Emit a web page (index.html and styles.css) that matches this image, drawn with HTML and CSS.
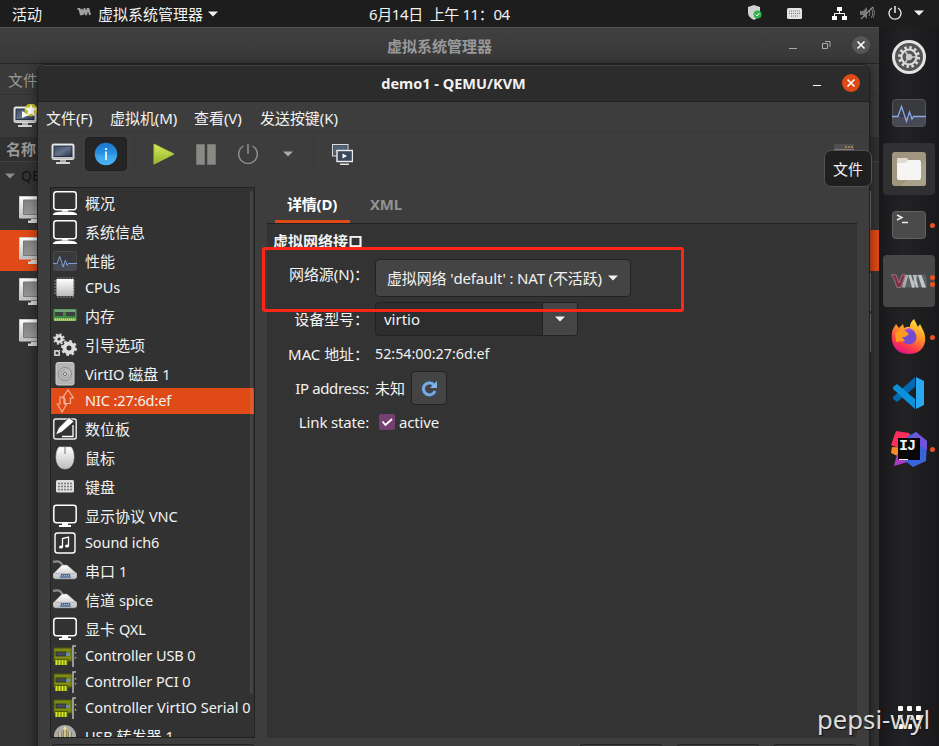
FILE: index.html
```
<!DOCTYPE html>
<html lang="zh-CN">
<head>
<meta charset="utf-8">
<title>demo1 - QEMU/KVM</title>
<link rel="stylesheet" href="styles.css">
</head>
<body>
<svg class="defs" width="0" height="0" aria-hidden="true">
  <defs>
    <linearGradient id="gSilver" x1="0" y1="0" x2="0" y2="1"><stop offset="0" stop-color="#fff"/><stop offset="1" stop-color="#bcbcbc"/></linearGradient>
    <linearGradient id="gScreen" x1="0" y1="0" x2="1" y2="1"><stop offset="0" stop-color="#3c4a62"/><stop offset=".5" stop-color="#64728a"/><stop offset="1" stop-color="#222f47"/></linearGradient>
    <linearGradient id="gGrey" x1="0" y1="0" x2="1" y2="1"><stop offset="0" stop-color="#808080"/><stop offset="1" stop-color="#aaa"/></linearGradient>
    <linearGradient id="gInfo" x1="0" y1="0" x2="0" y2="1"><stop offset="0" stop-color="#1a76d2"/><stop offset=".52" stop-color="#2b93e0"/><stop offset=".53" stop-color="#39a1e8"/><stop offset="1" stop-color="#4cb2f0"/></linearGradient>
    <linearGradient id="gPlay" x1="0" y1="0" x2="0" y2="1"><stop offset="0" stop-color="#e0e85c"/><stop offset="1" stop-color="#8fb52c"/></linearGradient>
    <linearGradient id="gFox" x1=".8" y1="0" x2=".3" y2="1"><stop offset="0" stop-color="#ffe840"/><stop offset=".4" stop-color="#ff9a28"/><stop offset=".75" stop-color="#ff3a48"/><stop offset="1" stop-color="#d8108c"/></linearGradient>
    <symbol id="display" viewBox="0 0 24 24"><rect x=".8" y=".8" width="22.400" height="17.900" rx="2.600" fill="none" stroke="#fff" stroke-width="1.500"/><path d="M9 19h6v1.200H9zM2 21.500c6-1.200 14-1.200 20 0l2 1.500v1H0v-1z" fill="#fff"/></symbol>
    <symbol id="screen" viewBox="0 0 24 24"><rect x=".8" y="1.300" width="22.400" height="17.400" rx="2.600" fill="none" stroke="#fff" stroke-width="1.500"/><path d="M9 19h6v2h3v2H6v-2h3z" fill="#fff"/></symbol>
    <symbol id="pulse" viewBox="0 0 34 28"><rect x=".5" y=".5" width="33" height="27" rx="3" fill="#393a3e" stroke="#555"/><path d="M1 18h32v7q0 2-2 2H3q-2 0-2-2z" fill="#474955"/><path d="M0 17.500h6l3.500-10 5 15 3-9.500 2.500 7 1.500-2.500H34" fill="none" stroke="#8ba8e8" stroke-width="1.300"/></symbol>
    <symbol id="serial" viewBox="0 0 24 24"><path d="M0 3c8-2 8 1 11 6" fill="none" stroke="#8c8c8c" stroke-width="2.200"/><path d="M9 6h5l8 7 2 1.500v4L22 20H2l-2-1.500V15z" fill="url(#gSilver)" stroke="#888" stroke-width=".5"/><path d="M2 14.500h20" stroke="#aaa" stroke-width=".7"/><path d="M8 15h9l1 4H7z" fill="#4f6f96"/><path d="M9 16.500h8M8.500 18h9" stroke="#c7d7ea" stroke-width=".7" stroke-dasharray="1 1"/></symbol>
    <symbol id="card" viewBox="0 0 24 24"><path d="M1 4h18v13H1z" fill="#748313" stroke="#4e580c"/><path d="M2 15h13v6H2z" fill="#536000"/><path d="M3.500 21v-5M6.500 21v-5M9.500 21v-5M12.500 21v-5" stroke="#d9ea28" stroke-width="2"/><path d="M3 8h10v4H3z" fill="#454b50" stroke="#222" stroke-width=".6"/><path d="M13 9h4v3h-4z" fill="#648db5"/><path d="M1.500 5.500h15M1.500 13.500h17" stroke="#87951b" stroke-width=".8"/><path d="M23 2h-3v21" fill="none" stroke="#bbb" stroke-width="1.500"/><path d="M22.500 8v1.500M22.500 13v1.500" stroke="#aaa" stroke-width="1.500"/></symbol>
    <symbol id="vm" viewBox="0 0 32 27"><path d="M.5.500H32v21.500H.500z" fill="url(#gSilver)" stroke="#ccc"/><path d="M4.500 4H32v14.500H4.500z" fill="url(#gGrey)" stroke="#7a7a7a"/><path d="M12 23h20v1.500H12zM9 24.500h23V27H9z" fill="#d8d8d8"/></symbol>
    <symbol id="host" viewBox="0 0 24 22"><rect x="1" y="1" width="22" height="15.500" rx="1.500" fill="url(#gSilver)" stroke="#ddd"/><rect x="3" y="3" width="18" height="10.500" fill="url(#gScreen)" stroke="#25324a"/><path d="M9 17h6v2H9z" fill="#aaa"/><path d="M5 19h14v2H5z" fill="#d4d4d0"/></symbol>
    <symbol id="caret" viewBox="0 0 10 6"><path d="M0 .5h10L5 5.500z" fill="currentColor"/></symbol>
    <symbol id="close" viewBox="0 0 18 18"><circle cx="9" cy="9" r="9" fill="currentColor"/><path d="M5.500 5.500l7 7M12.500 5.500l-7 7" stroke="#fff" stroke-width="1.600"/></symbol>
  </defs>
</svg>

<header class="topbar">
  <span class="activities">活动</span>
  <svg class="vmmini" viewBox="0 0 14 9"><path d="M.5 1h2l1.500 6 1-6M5.500 7L7.500 1 9 7l1.500-6h1L13 7" fill="none" stroke="#a0a0a0" stroke-width="2"/></svg>
  <span class="app">虚拟系统管理器</span>
  <svg class="caret"><use href="#caret"/></svg>
  <span class="clock">6月14日&nbsp; 上午 11：04</span>
  <div class="tray">
    <svg width="14" height="16" viewBox="0 0 14 16"><path d="M6 0l6 2v6q0 4-6 7Q0 12 0 8V2z" fill="#d2d2d2"/><circle cx="9.500" cy="9.500" r="4" fill="#2fb44a"/><path d="M7.500 9.500l1.500 1.500 2.500-3" fill="none" stroke="#fff"/></svg>
    <svg width="15" height="11" viewBox="0 0 15 11"><rect width="15" height="11" rx="1.500" fill="#e2e2e2"/><path d="M2 3h11M2 5.500h11M4 8h7" stroke="#777" stroke-dasharray="1 1"/></svg>
    <svg width="15" height="13" viewBox="0 0 15 13"><path d="M5 0h5v4H5zM0 9h5v4H0zM10 9h5v4h-5z" fill="#fff"/><path d="M7.500 4v3M2.500 9V6.500h10V9" fill="none" stroke="#fff"/></svg>
    <svg width="15" height="14" viewBox="0 0 15 14"><path d="M0 5h3l4-4v12L3 9H0z" fill="#777"/><path d="M9 4q2 3 0 6M11 2q3.500 5 0 10M13 1q3 6 0 11" fill="none" stroke="#777"/><path d="M1 13L13 1" stroke="#8c8c8c" stroke-width="1.300"/></svg>
    <svg width="14" height="14" viewBox="0 0 14 14"><path d="M4 2a6 6 0 1 0 6 0" fill="none" stroke="#eee" stroke-width="1.300"/><path d="M7 0v7" stroke="#fff" stroke-width="1.400"/></svg>
    <svg width="10" height="6"><use href="#caret"/></svg>
  </div>
</header>

<div class="desktop">
  <section class="manager">
    <div class="manager-title">
      <b>虚拟系统管理器</b>
      <div class="controls">
        <i class="min"></i>
        <svg width="9" height="9" viewBox="0 0 9 9"><path d="M.5 2.500h5v5h-5zM3 .5h5V6" fill="none" stroke="#aaa"/></svg>
        <svg class="close" width="18" height="18"><use href="#close"/></svg>
      </div>
    </div>
    <div class="manager-menu">文件</div>
    <div class="manager-tools">
      <svg width="24" height="24" viewBox="0 0 24 24"><use href="#host" y="2" width="24" height="22"/><path d="M9 7l7 4-7 3z" fill="#fff"/><circle cx="18" cy="6" r="6.500" fill="#d8d420" opacity=".85"/><path d="M18 0l1.700 4 4.300.3-3.300 2.900L22 12l-4-2.500L14 12l1.300-4.800L12 4.300l4.300-.3z" fill="#fff"/></svg>
    </div>
    <div class="manager-head">名称</div>
    <div class="manager-group"><svg width="10" height="6"><use href="#caret"/></svg><span>QE</span></div>
    <div class="vmrow"><svg><use href="#vm"/></svg><i></i></div>
    <div class="vmrow selected"><svg><use href="#vm"/></svg></div>
    <div class="vmrow"><svg><use href="#vm"/></svg><i></i></div>
    <div class="vmrow"><svg><use href="#vm"/></svg><i></i></div>
  </section>

  <nav class="dock">
    <div class="slot"><svg width="34" height="34" viewBox="0 0 34 34"><circle cx="17" cy="17" r="15.500" fill="#555" stroke="#e4e4e4" stroke-width="3"/><circle cx="17" cy="17" r="9.500" fill="none" stroke="#ddd" stroke-width="3" stroke-dasharray="2.500 2.470"/><circle cx="17" cy="17" r="7.500" fill="none" stroke="#ddd" stroke-width="2"/><circle cx="17" cy="17" r="3.200" fill="#ccc"/><path d="M17 17h7M17 17l-4-6M17 17l-4 6" stroke="#ccc" stroke-width="1.500"/></svg></div>
    <div class="slot"><svg width="34" height="28"><use href="#pulse"/></svg></div>
    <div class="slot lit"><svg width="34" height="34" viewBox="0 0 34 34"><rect width="34" height="34" rx="3" fill="#a0967f"/><path d="M34 8v23q0 3-3 3H9z" fill="#aaa18b"/><path d="M5 8q0-2 2-2h7q1 0 2 2h11q2 0 2 2v15q0 3-2 3H7q-2 0-2-3z" fill="#f7f5f3"/><path d="M5 8q0-2 2-2h7q1 0 2 2-1 3-4 3H5z" fill="#e0dbd2"/></svg></div>
    <div class="slot"><svg width="34" height="28" viewBox="0 0 34 28"><rect x=".5" y=".5" width="33" height="27" rx="3" fill="#4a4a4a" stroke="#626262"/><path d="M5 4l5 2.500L5 9M10 11.500h6" fill="none" stroke="#eee" stroke-width="1.400"/></svg><i class="dot"></i></div>
    <div class="slot vmm"><svg width="36" height="14" viewBox="0 0 36 14"><path d="M10 13.500L14 .5h21l1 13z" fill="#5c6163"/><path d="M11 13.500L14.500 1h3L14 13.500zM20.500 13.500L24 1h2.500L23 13.500z" fill="#a5abad"/><path d="M17.500 1H20l4 12.500h-3zM22 1h2l3.500 12.500h-2.500zM27 1h3.500l4.500 12.500h-4z" fill="#c3c7c8"/><path d="M.5.800h4.500L8 9l3-8.200h3.500L9.500 13.500H6L2.500 3.500z" fill="#832a46" stroke="#a89097" stroke-width=".7"/></svg><i class="dot two"></i></div>
    <div class="slot"><svg width="36" height="36" viewBox="0 0 36 36"><path d="M2 10L5 5l3 4 4-4 1 4q4-2 6-1 0-5 4-8l4 8 2-3 3 6q3 6 2 12-3 12-16 12Q4 35 1 22 0 14 2 10z" fill="url(#gFox)"/><circle cx="18" cy="18" r="7.500" fill="#744bd0"/><path d="M4 14q7-7 14 1l-4 3h-3l3 4-9 1z" fill="#ff9a20"/><path d="M13 12q5-6 11 1l-5-1z" fill="#9b4ce8"/></svg><i class="dot"></i></div>
    <div class="slot"><svg width="34" height="34" viewBox="0 0 34 34"><path d="M1 21L23 1v10L5 26l-4-3z" fill="#0069b1"/><path d="M1 11l4-3 18 15v10L1 13z" fill="#0b91dc"/><path d="M24 1l8 4v24l-8 4z" fill="#29a9f2"/></svg></div>
    <div class="slot"><svg width="36" height="36" viewBox="0 0 36 36"><path d="M5 0l13 2 6 10-7 9L0 14z" fill="#ff2e5c"/><path d="M1 16l12 1v11L0 22z" fill="#f98a25"/><path d="M3 35l3-12 14 7z" fill="#ad3bc6"/><path d="M25 1l11 9-1 20-13 6-9-7 4-24z" fill="#3a64dc"/><path d="M25 1l11 9v9L18 8z" fill="#7054dc"/><path d="M7 7h22v22H7z" fill="#080808"/></svg><b class="ij">IJ</b><i class="dot"></i></div>
    <div class="apps"><i></i><i></i><i></i><i></i><i></i><i></i><i></i><i></i><i></i></div>
  </nav>

  <section class="window">
    <div class="titlebar">
      <b>demo1 - QEMU/KVM</b>
      <div class="controls"><i class="min"></i><svg class="close" width="18" height="18"><use href="#close"/></svg></div>
    </div>
    <div class="menubar"><span>文件(F)</span><span>虚拟机(M)</span><span>查看(V)</span><span>发送按键(K)</span></div>
    <div class="toolbar">
      <span class="tool console"><svg width="24" height="22"><use href="#host"/></svg></span>
      <span class="tool info"><svg width="24" height="24" viewBox="0 0 24 24"><circle cx="12" cy="12" r="11.200" fill="url(#gInfo)"/><path d="M12 9.500V18M12 6v2" stroke="#fff" stroke-width="1.600"/></svg></span>
      <span class="rule"></span>
      <span class="tool play"><svg width="22" height="22" viewBox="0 0 22 22"><path d="M1 1l20 10L1 21z" fill="url(#gPlay)" stroke="#a9c83b"/></svg></span>
      <span class="tool pause"><svg width="20" height="21" viewBox="0 0 20 21"><path d="M.5.500h8v20h-8zM11.500.500h8v20h-8z" fill="#898986" stroke="#757572"/></svg></span>
      <span class="tool power"><svg width="20" height="20" viewBox="0 0 20 20"><path d="M5.500 2a9.300 9.300 0 1 0 9 0" fill="none" stroke="#919191" stroke-width="1.400"/><path d="M10 0v10" stroke="#999" stroke-width="1.400"/></svg></span>
      <span class="tool more"><svg width="10" height="6"><use href="#caret"/></svg></span>
      <span class="rule second"></span>
      <span class="tool"><svg width="21" height="21" viewBox="0 0 21 21"><rect x=".5" y=".5" width="15.500" height="11.500" fill="#46556a" stroke="#ddd"/><rect x="2" y="2" width="12" height="7" fill="#526579"/><rect x="5" y="6.500" width="15.500" height="11" fill="#3b475c" stroke="#eee" stroke-width="1.400"/><path d="M10.500 9.500l4.500 2.500-4.500 2.500z" fill="#fff"/><path d="M8 19.500h9v1.500H8z" fill="#ddd"/></svg></span>
      <span class="fullscreen"><svg width="20" height="20" viewBox="0 0 20 20"><rect width="20" height="20" fill="#505050"/><path d="M0 6h20" stroke="#aaa"/><path d="M11 3h8" stroke="#a57a3e" stroke-width="2" stroke-dasharray="2 1"/></svg></span>
    </div>
    <div class="content">
      <ul class="hardware">
        <li><svg><use href="#display"/></svg>概况</li>
        <li><svg><use href="#display"/></svg>系统信息</li>
        <li><svg><use href="#pulse"/></svg>性能</li>
        <li class="short"><svg viewBox="0 0 24 24"><path d="M5 1v21M8 1v21M11 1v21M14 1v21M17 1v21M20 1v21M1 5h21M1 8h21M1 11h21M1 14h21M1 17h21" stroke="#888"/><rect x="3.500" y="3" width="17" height="17" fill="url(#gSilver)"/></svg><span>CPUs</span></li>
        <li><svg viewBox="0 0 24 24"><path d="M1 5.500h22v11H1z" fill="#3d8a43" stroke="#52a055"/><path d="M2 8h8v4H2zM13 8h9v4h-9z" fill="#3d403e"/><path d="M2 7h20" stroke="#bbb"/><path d="M1.500 15.500h21" stroke="#ddd46c" stroke-width="2.500" stroke-dasharray="1.500 .5"/></svg>内存</li>
        <li><svg viewBox="0 0 24 24"><g fill="none" stroke="#ddd"><circle cx="16" cy="15" r="4.500" stroke-width="4"/><circle cx="16" cy="15" r="7" stroke-width="2" stroke-dasharray="2.800 2.700"/><circle cx="6" cy="6" r="3" stroke-width="2.800"/><circle cx="6" cy="6" r="5" stroke-width="1.600" stroke-dasharray="2 1.920"/><circle cx="4" cy="20" r="2.300" stroke-width="1.500"/><path d="M1 17l1.500 1.500M7 17l-1.500 1.500M1 23l1.500-1.500M7 23l-1.500-1.500"/></g></svg>引导选项</li>
        <li><svg viewBox="0 0 24 24"><rect x="3" y=".5" width="18" height="22.500" rx="2" fill="#b4b4b4" stroke="#d0d0d0"/><circle cx="12" cy="12" r="6.500" fill="#bebebe" stroke="#888"/><circle cx="12" cy="12" r="1.500" fill="#fff" stroke="#666"/><path d="M12 8a4 4 0 1 0 4 4" fill="none" stroke="#999"/></svg><span>VirtIO</span>&nbsp;磁盘&nbsp;<span>1</span></li>
        <li class="short active"><svg viewBox="0 0 24 24"><path d="M11.500 15V9H9.500l5.500-8 5.500 8h-3v5.500h-5.500M12 10v6M4 14.500l5 8.500 5-8.500h-3V8H7v7H3.500" fill="none" stroke="#f3b098" stroke-width="1.200"/></svg><span>NIC :27:6d:ef</span></li>
        <li><svg viewBox="0 0 24 24"><rect x=".8" y="2" width="22.400" height="20" rx="2" fill="none" stroke="#eee" stroke-width="1.400"/><path d="M2.500 18l3-7L16 .500l5 4L9 15z" fill="#fff" stroke="#333" stroke-width=".8"/><path d="M9 19.500h11V8" fill="none" stroke="#fff" stroke-width="1.300"/></svg>数位板</li>
        <li><svg viewBox="0 0 24 24"><path d="M6 1h12q3 3 3 11-1 11-9 11T3 12Q3 4 6 1z" fill="url(#gSilver)" stroke="#ccc" stroke-width=".6"/><path d="M12 1v7" stroke="#777"/></svg>鼠标</li>
        <li><svg viewBox="0 0 24 24"><rect x="3" y="5" width="18" height="12.500" rx="1.500" fill="#ddd"/><path d="M5 8.500h14M5 11.500h14M5 14.500h14" stroke="#777" stroke-width="1.300" stroke-dasharray="2 1"/></svg>键盘</li>
        <li><svg><use href="#screen"/></svg>显示协议&nbsp;<span>VNC</span></li>
        <li class="short"><svg viewBox="0 0 24 24"><rect x="2" y="2" width="20" height="20" rx="2.500" fill="none" stroke="#fff" stroke-width="1.400"/><path d="M9.500 16V7.500l6-1.500v9" fill="none" stroke="#fff" stroke-width="1.300"/><ellipse cx="8" cy="16" rx="2" ry="1.600" fill="#fff"/><ellipse cx="14" cy="15" rx="2" ry="1.600" fill="#fff"/></svg><span>Sound ich6</span></li>
        <li><svg><use href="#serial"/></svg>串口&nbsp;<span>1</span></li>
        <li><svg><use href="#serial"/></svg>信道&nbsp;<span>spice</span></li>
        <li><svg><use href="#screen"/></svg>显卡&nbsp;<span>QXL</span></li>
        <li class="short"><svg><use href="#card"/></svg><span>Controller USB 0</span></li>
        <li class="short"><svg><use href="#card"/></svg><span>Controller PCI 0</span></li>
        <li class="short"><svg><use href="#card"/></svg><span class="wide">Controller VirtIO Serial 0</span></li>
        <li><svg viewBox="0 0 24 24"><circle cx="12" cy="12" r="11" fill="#aaa"/><path d="M12 21V4M7 8v5l5 4 5-4V8" fill="none" stroke="#63581e" stroke-width="3"/><path d="M12 21V4M7 8v5l5 4 5-4V8" fill="none" stroke="#eee0a0" stroke-width="1.600"/><path d="M12 2l2.500 3.500h-5z" fill="#eee0a0"/></svg><span>USB</span>&nbsp;转发器&nbsp;<span>1</span></li>
      </ul>
      <div class="notebook">
        <div class="tabs"><b class="current">详情(D)</b><b>XML</b></div>
        <div class="page">
          <b class="heading">虚拟网络接口</b>
          <div class="form">
            <label class="source">网络源(N)：</label>
            <div class="combo"><span>虚拟网络 'default' : NAT (不活跃)</span><svg width="10" height="6"><use href="#caret"/></svg></div>
            <label>设备型号：</label>
            <div class="entry"><span>virtio</span><i><svg width="10" height="6"><use href="#caret"/></svg></i></div>
            <label>MAC 地址：</label>
            <div class="mac">52:54:00:27:6d:ef</div>
            <label><span>IP address:</span></label>
            <div class="ip">未知<i><svg width="17" height="17" viewBox="0 0 17 17"><path d="M14 11a6 6 0 1 1-1-6" fill="none" stroke="#315d94" stroke-width="4"/><path d="M14 11a6 6 0 1 1-1-6" fill="none" stroke="#7dace0" stroke-width="2.800"/><path d="M9 8h7V1z" fill="#84b3e6"/></svg></i></div>
            <label class="state"><span>Link state:</span></label>
            <div class="link"><svg width="16" height="16" viewBox="0 0 16 16"><rect width="16" height="16" rx="2" fill="#763f72"/><path d="M3.500 7.500l3 3.500 6.500-6" fill="none" stroke="#fff" stroke-width="1.800"/></svg><span>active</span></div>
          </div>
        </div>
      </div>
    </div>
    <div class="buttons"><i></i><i></i><i></i><i></i></div>
  </section>
</div>
<div class="tip">文件</div>
<div class="mark"></div>
<div class="watermark">pepsi-wyl</div>
</body>
</html>
```
FILE: styles.css
```
* { box-sizing: border-box; }
body { margin: 0; width: 939px; height: 746px; overflow: hidden; position: relative; background: #1b1b1d; color: #f2f2f2; font: 15px/20px "Noto Sans", "Noto Sans CJK SC", sans-serif; }
svg { display: block; flex: none; }
i { font-style: normal; }
.defs { position: absolute; }

.topbar { height: 27px; background: #1d1d1d; display: flex; align-items: center; position: relative; padding: 0 15px 0 12px; }
.activities { width: 65px; }
.vmmini { width: 14px; height: 9px; margin: -3px 7px 0 0; }
.app { width: 105px; margin-right: 5px; }
.caret { width: 10px; height: 6px; }
.clock { margin-left: 151px; letter-spacing: -.4px; white-space: nowrap; }
.tray { margin-left: auto; margin-top: -1px; display: grid; grid-template-columns: 39px 45px 28px 28px 26px 10px; align-items: center; }

.desktop { display: flex; height: 719px; }
.manager { width: 879px; background: #343434; color: #999; overflow: hidden; }
.manager-title { height: 36px; background: linear-gradient(#404040, #383838); border-top: 1px solid #505050; display: grid; place-items: center; position: relative; padding-top: 0; }
.controls { display: flex; align-items: center; }
.manager-title .controls { position: absolute; right: 9px; top: 8px; gap: 25px; }
.manager-title .close { color: #565656; margin-left: -4px; }
.min { width: 8px; height: 1px; background: #aaa; margin-top: 6px; }
.manager-menu { height: 32px; border-top: 1px solid #252525; border-bottom: 1px solid #333; background: #3a3a3a; padding: 6px 8px; }
.manager-tools { height: 42px; background: #3a3a3a; padding: 9px 13px; }
.manager-head { height: 25px; background: #303030; border-bottom: 1px solid #414141; padding: 2px 6px; font-weight: 700; }
.manager-group { height: 27px; display: flex; align-items: center; gap: 6px; padding-left: 5px; color: #8c8c8c; }
.manager-group span { color: #111; font-size: 14px; }
.vmrow { height: 41px; display: flex; align-items: center; justify-content: space-between; padding: 0 8px 0 19px; }
.vmrow svg { width: 32px; height: 27px; }
.vmrow i { width: 1px; height: 38px; background: #777; }
.selected { background: #df4a16; }

.dock { width: 60px; background: linear-gradient(90deg, #19191b, #222224 40%, #19191b); padding: 4px 4px; display: flex; flex-direction: column; gap: 4px; }
.slot { height: 52px; display: grid; place-items: center; border-radius: 4px; position: relative; flex: none; }
.lit { background: #303032; }
.vmm { background: #474747; }
.dot { position: absolute; right: 0; top: 24px; width: 5px; height: 5px; border-radius: 50%; background: #e95420; }
.two { top: 20px; box-shadow: 0 7px #e95420; }
.ij { position: absolute; left: 16px; top: 16px; font: 700 15px/15px "Liberation Mono", monospace; letter-spacing: -1px; height: 21px; border-bottom: 1px solid #fff; width: 9px; }
.apps { margin-top: 227px; display: grid; grid-template-columns: repeat(3, 5px); gap: 4px; justify-content: center; }
.apps i { height: 5px; border-radius: 1px; background: #fff; }

.window { position: absolute; left: 37px; top: 64px; width: 833px; height: 700px; border: 1px solid #202020; border-radius: 8px 8px 0 0; background: #3d3d3d; box-shadow: 0 2px 12px rgba(0,0,0,.5); overflow: hidden; }
.titlebar { height: 37px; background: #2c2c2c; border-top: 1px solid #414141; border-bottom: 1px solid #202020; display: grid; place-items: center; position: relative; font-size: 14.500px; padding-bottom: 1px; }
.titlebar .controls { position: absolute; right: 9px; top: 8px; gap: 21px; }
.titlebar .min { background: #fff; margin-top: 5px; }
.titlebar .close { color: #df4a16; }
.menubar { height: 31px; border-bottom: 1px solid #383838; display: grid; grid-template-columns: 64px 84px 66px 90px; padding: 6px 8px; letter-spacing: -.05px; white-space: nowrap; }
.toolbar { height: 54px; display: flex; align-items: flex-start; padding: 4px 12px 4px 13px; color: #aaa; }
.tool { height: 34px; display: grid; place-items: center; }
.console { width: 24px; margin-right: 10px; }
.info { width: 42px; background: #252525; border: 1px solid #202020; border-radius: 4px; }
.rule { width: 1px; height: 33px; background: #373737; margin: 0 17px 0 7px; }
.play { width: 24px; margin-right: 20px; }
.pause { margin-right: 22px; }
.power { margin-right: 25px; }
.second { margin: 0 18px 0 20px; }
.fullscreen { margin: 7px 3px 0 auto; }
.content { display: flex; gap: 12px; padding: 0 12px 0 12px; height: 551px; }
.hardware { width: 205px; height: 551px; margin: 0; padding: 0; list-style: none; border: 1px solid #222; background: #323232; overflow: hidden; position: relative; }
.hardware::after { content: ""; position: absolute; right: 1px; top: 3px; width: 3px; height: 503px; border-radius: 2px; background: rgba(255,255,255,.09); }
.hardware li { height: 29px; display: flex; align-items: center; padding: 1px 0 0 2px; white-space: nowrap; }
.hardware li svg { width: 24px; height: 24px; margin: -1px 8px 0 0; }
.hardware li span { font-size: 14.500px; letter-spacing: -.1px; }
.hardware li .wide { letter-spacing: 0; }
.hardware .short { height: 26px; padding: 0 0 2px 2px; }
.hardware .short svg { margin-top: 2px; }
.hardware .active { background: #df4a16; }
.notebook { flex: 1; }
.tabs { height: 37px; border-bottom: 1px solid #222; display: flex; color: #929292; padding-left: 8px; align-items: stretch; }
.tabs b { padding: 7px 12px 0; letter-spacing: -.2px; height: 36px; width: 75px; margin-right: 8px; white-space: nowrap; }
.tabs .current { color: #fff; border-bottom: 3px solid #df4a16; }
.page { height: 514px; background: #333; padding: 7px 6px; }
.heading { display: block; height: 20px; }
.form { display: grid; grid-template-columns: 96px 1fr; column-gap: 6px; grid-template-rows: 51px 34px 35px 34px 34px; align-items: center; white-space: nowrap; }
.form label { text-align: right; letter-spacing: -.05px; }
.form label span { letter-spacing: -.35px; }
.form .state span { letter-spacing: -.15px; }
.form .source { margin-top: -6px; }
.combo { width: 256px; height: 38px; margin-top: 2px; border: 1px solid #222; border-radius: 4px; background: #444; display: flex; align-items: center; justify-content: space-between; padding: 0 12px 0 11px; letter-spacing: -.15px; }
.entry { width: 203px; height: 34px; border: 1px solid #222; border-radius: 4px; background: #2d2d2d; display: flex; align-items: center; justify-content: space-between; padding-left: 8px; }
.entry i { width: 35px; height: 32px; background: #454545; border-left: 1px solid #222; display: grid; place-items: center; border-radius: 0 3px 3px 0; }
.mac { font-size: 14.300px; }
.ip { display: flex; align-items: center; gap: 6px; }
.ip i { width: 36px; height: 34px; border: 1px solid #222; border-radius: 4px; background: #444; display: grid; place-items: center; }
.link { display: flex; align-items: center; gap: 4px; padding-left: 4px; }
.link span { letter-spacing: -.15px; }
.buttons { padding: 6px 12px 6px 13px; display: flex; gap: 13px; }
.buttons i { width: 84px; height: 30px; border: 1px solid #222; border-radius: 4px; flex: none; }
.buttons i:first-child { width: 204px; margin-right: 311px; }

.tip { position: absolute; left: 824px; top: 150px; width: 48px; height: 37px; border: 1px solid #515151; border-radius: 7px; background: #1f1f1f; padding: 8px 8px; }
.mark { position: absolute; left: 262px; top: 247px; width: 422px; height: 65px; border: 3px solid #ff2617; border-radius: 3px; }
.watermark { position: absolute; left: 817px; top: 703px; font: 25.700px/34px "Noto Sans", sans-serif; color: #ddd; text-shadow: 1px 1px 1px #111; white-space: nowrap; }
```
